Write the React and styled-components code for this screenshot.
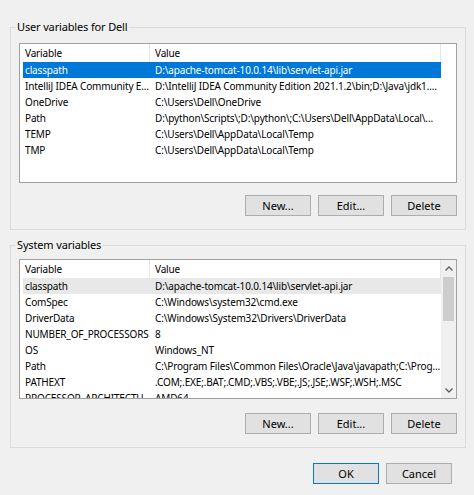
import styled, { createGlobalStyle } from "styled-components";

const GlobalStyle = createGlobalStyle`
  body {
    margin: 0;
    background: #f0f0f0;
    font-family: "Noto Sans", "Open Sans", sans-serif;
    font-size: 10px;
    letter-spacing: -0.15px;
    color: #000;
  }
`;

const userVars = [
  ["classpath", "D:\\apache-tomcat-10.0.14\\lib\\servlet-api.jar"],
  ["IntelliJ IDEA Community E...", "D:\\IntelliJ IDEA Community Edition 2021.1.2\\bin;D:\\Java\\jdk1...."],
  ["OneDrive", "C:\\Users\\Dell\\OneDrive"],
  ["Path", "D:\\python\\Scripts\\;D:\\python\\;C:\\Users\\Dell\\AppData\\Local\\..."],
  ["TEMP", "C:\\Users\\Dell\\AppData\\Local\\Temp"],
  ["TMP", "C:\\Users\\Dell\\AppData\\Local\\Temp"],
];

const systemVars = [
  ["classpath", "D:\\apache-tomcat-10.0.14\\lib\\servlet-api.jar"],
  ["ComSpec", "C:\\Windows\\system32\\cmd.exe"],
  ["DriverData", "C:\\Windows\\System32\\Drivers\\DriverData"],
  ["NUMBER_OF_PROCESSORS", "8"],
  ["OS", "Windows_NT"],
  ["Path", "C:\\Program Files\\Common Files\\Oracle\\Java\\javapath;C:\\Prog..."],
  ["PATHEXT", ".COM;.EXE;.BAT;.CMD;.VBS;.VBE;.JS;.JSE;.WSF;.WSH;.MSC"],
  ["PROCESSOR_ARCHITECTU...", "AMD64"],
];

const Page = styled.div`
  width: 474px;
  height: 495px;
  box-sizing: border-box;
  padding: 19px 8px 0 10px;
  display: flex;
  flex-direction: column;
`;

const Group = styled.fieldset`
  margin: 0 0 ${(p) => p.$after}px;
  padding: ${(p) => p.$top}px 8px 13px;
  border: 1px solid #dcdcdc;
  min-width: 0;
`;

const Legend = styled.legend`
  margin-left: -4px;
  padding: 0 2px;
  line-height: 16px;
  font-size: 11px;
`;

const List = styled.div`
  height: 140px;
  box-sizing: border-box;
  border: 1px solid #a0a0a0;
  background: #fff;
  display: flex;
  overflow: hidden;
`;

const Table = styled.div`
  width: 418px;
  margin-left: 3px;
  display: flex;
  flex-direction: column;
  flex-shrink: 0;
`;

const HeaderRow = styled.div`
  display: flex;
  height: 18px;
  line-height: 18px;
  flex-shrink: 0;
`;

const HeaderCell = styled.div`
  width: ${(p) => (p.$first ? "127px" : "auto")};
  flex: ${(p) => (p.$first ? "none" : "1")};
  padding-left: ${(p) => (p.$first ? 2 : 5)}px;
  box-sizing: border-box;
  border-right: 1px solid #e5e5e5;
`;

const Row = styled.div`
  display: flex;
  height: 16px;
  line-height: 16px;
  flex-shrink: 0;
  background: ${(p) =>
    p.$state === "active" ? "#0078d7" : p.$state === "idle" ? "#e8e8e8" : "transparent"};
  color: ${(p) => (p.$state === "active" ? "#fff" : "#000")};
`;

const Cell = styled.div`
  width: ${(p) => (p.$first ? "127px" : "auto")};
  flex: ${(p) => (p.$first ? "none" : "1")};
  padding-left: ${(p) => (p.$first ? 2 : 5)}px;
  box-sizing: border-box;
  white-space: nowrap;
  overflow: hidden;
`;

const ScrollBar = styled.div`
  margin-left: auto;
  width: 15px;
  background: #f0f0f0;
  display: flex;
  flex-direction: column;
`;

const Arrow = styled.div`
  height: 16px;
  display: flex;
  align-items: center;
  justify-content: center;
`;

const Track = styled.div`
  flex: 1;
  padding: 1px 2px;
`;

const Thumb = styled.div`
  height: 44px;
  background: #cdcdcd;
`;

const ButtonRow = styled.div`
  display: flex;
  justify-content: flex-end;
  gap: 7px;
  margin-top: ${(p) => p.$top}px;
  padding-right: ${(p) => p.$right || 0}px;
`;

const Button = styled.button`
  width: 66px;
  height: 21px;
  box-sizing: border-box;
  border: 1px solid ${(p) => (p.$primary ? "#0078d7" : "#adadad")};
  background: #e1e1e1;
  font: inherit;
  font-size: 11px;
  color: #000;
  padding: 0;
`;

const Chevron = ({ up }) => (
  <svg width="8" height="5" viewBox="0 0 8 5">
    <polyline
      points={up ? "0.5,4.5 4,1 7.5,4.5" : "0.5,0.5 4,4 7.5,0.5"}
      fill="none"
      stroke="#606060"
      strokeWidth="1.3"
    />
  </svg>
);

function VarList({ rows, selected, scroll }) {
  return (
    <List>
      <Table>
        <HeaderRow>
          <HeaderCell $first>Variable</HeaderCell>
          <HeaderCell>Value</HeaderCell>
        </HeaderRow>
        {rows.map(([name, value], i) => (
          <Row key={name + i} $state={i === 0 ? selected : null}>
            <Cell $first>{name}</Cell>
            <Cell>{value}</Cell>
          </Row>
        ))}
      </Table>
      {scroll && (
        <ScrollBar>
          <Arrow>
            <Chevron up />
          </Arrow>
          <Track>
            <Thumb />
          </Track>
          <Arrow>
            <Chevron />
          </Arrow>
        </ScrollBar>
      )}
    </List>
  );
}

function App() {
  return (
    <>
      <GlobalStyle />
      <Page>
        <Group $top={8} $after={7}>
          <Legend>User variables for Dell</Legend>
          <VarList rows={userVars} selected="active" />
          <ButtonRow $top={12}>
            <Button>New...</Button>
            <Button>Edit...</Button>
            <Button>Delete</Button>
          </ButtonRow>
        </Group>
        <Group $top={6} $after={0}>
          <Legend>System variables</Legend>
          <VarList rows={systemVars} selected="idle" scroll />
          <ButtonRow $top={14}>
            <Button>New...</Button>
            <Button>Edit...</Button>
            <Button>Delete</Button>
          </ButtonRow>
        </Group>
        <ButtonRow $top={15} $right={14}>
          <Button $primary>OK</Button>
          <Button>Cancel</Button>
        </ButtonRow>
      </Page>
    </>
  );
}

export default App;
